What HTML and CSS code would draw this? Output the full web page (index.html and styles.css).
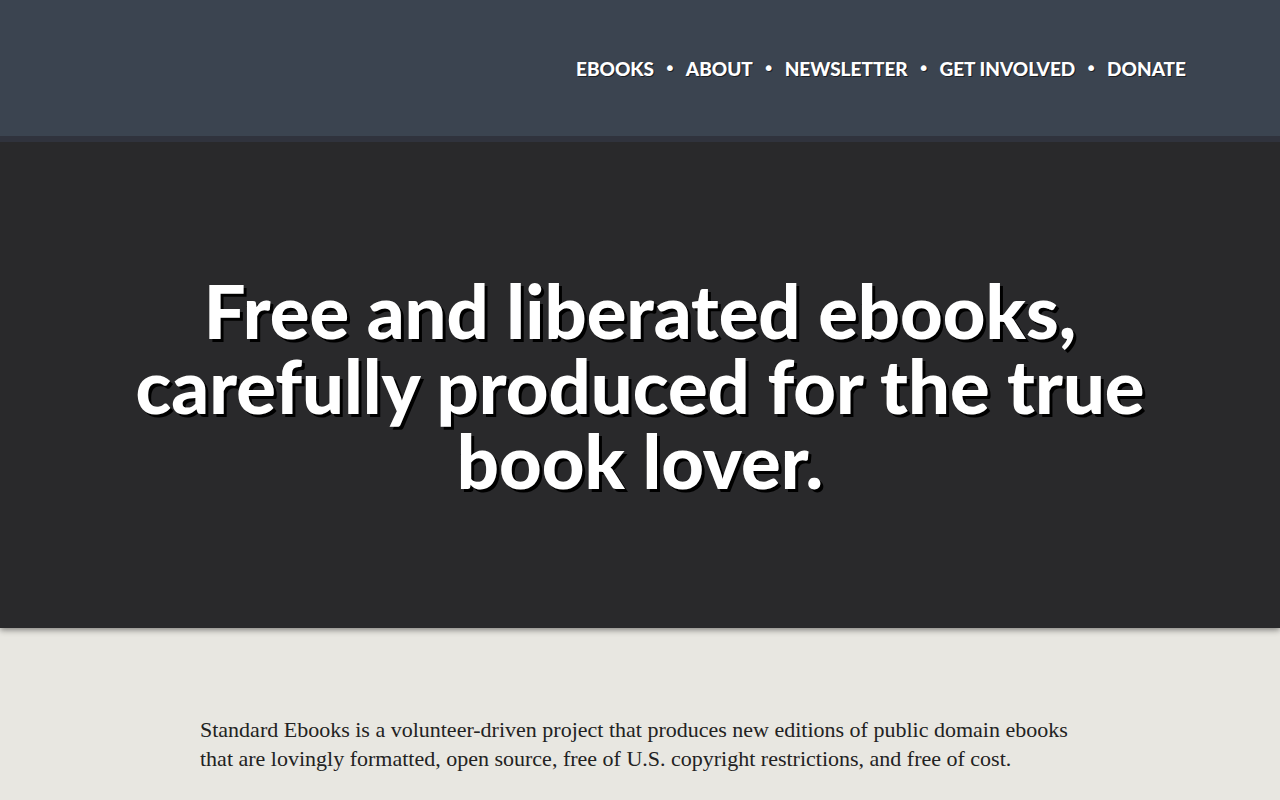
FILE: index.html
```html
<!DOCTYPE html>
<html lang="en">
<head>
    <meta charset="UTF-8">
    <meta name="viewport" content="width=device-width, initial-scale=1.0">
    <title>Standard Ebooks: Free and liberated ebooks, carefully produced for the true book lover.</title>
    <link rel="stylesheet" href="styles.css">
</head>
<body>
    <header class="site-header">
        <nav class="main-nav">
            <ul>
                <li><a href="#">Ebooks</a></li>
                <li><a href="#">About</a></li>
                <li><a href="#">Newsletter</a></li>
                <li><a href="#">Get Involved</a></li>
                <li><a href="#">Donate</a></li>
            </ul>
        </nav>
    </header>
    <main>
        <section class="hero">
            <h1>Free and liberated ebooks, carefully produced for the true book lover.</h1>
        </section>
        <section class="intro">
            <p>Standard Ebooks is a volunteer-driven project that produces new editions of public domain ebooks that are lovingly formatted, open source, free of U.S. copyright restrictions, and free of cost.</p>
        </section>
    </main>
</body>
</html>
```

FILE: styles.css
```css
body {
    margin: 0;
    background-color: #e8e7e1;
    color: #222;
    font-family: "Liberation Serif", "DejaVu Serif", serif;
}
.site-header {
    height: 136px;
    background-color: #3b4450;
    border-bottom: 6px solid #30333d;
    display: flex;
    justify-content: flex-end;
    align-items: center;
    padding-right: 94px;
    position: relative;
    z-index: 2;
}
.main-nav ul {
    list-style: none;
    margin: 0;
    padding: 0;
    display: flex;
    align-items: center;
}
.main-nav li {
    display: flex;
    align-items: center;
}
.main-nav li + li::before {
    content: "\2022";
    color: #fff;
    margin: 0 10px;
    font-family: "DejaVu Sans", sans-serif;
    font-size: 20px;
    text-shadow: 1px 1px 0 #1c1f25;
}
.main-nav a {
    font-family: "Lato", "Open Sans", sans-serif;
    font-weight: 900;
    font-size: 19px;
    text-transform: uppercase;
    text-decoration: none;
    color: #fff;
    text-shadow: 1px 1px 0 #1c1f25;
}
.hero {
    background-color: #29292b;
    height: 486px;
    display: flex;
    justify-content: center;
    align-items: center;
    box-shadow: 0 2px 6px rgba(0, 0, 0, 0.45);
    position: relative;
    z-index: 1;
}
.hero h1 {
    margin: 0;
    max-width: 1060px;
    font-family: "Lato", "Open Sans", sans-serif;
    font-weight: 900;
    font-size: 74px;
    line-height: 75px;
    text-align: center;
    color: #fff;
    text-shadow: 3px 3px 0 #000;
}
.intro {
    padding: 87px 200px 0;
}
.intro p {
    margin: 0;
    font-size: 22px;
    line-height: 29px;
}
```
